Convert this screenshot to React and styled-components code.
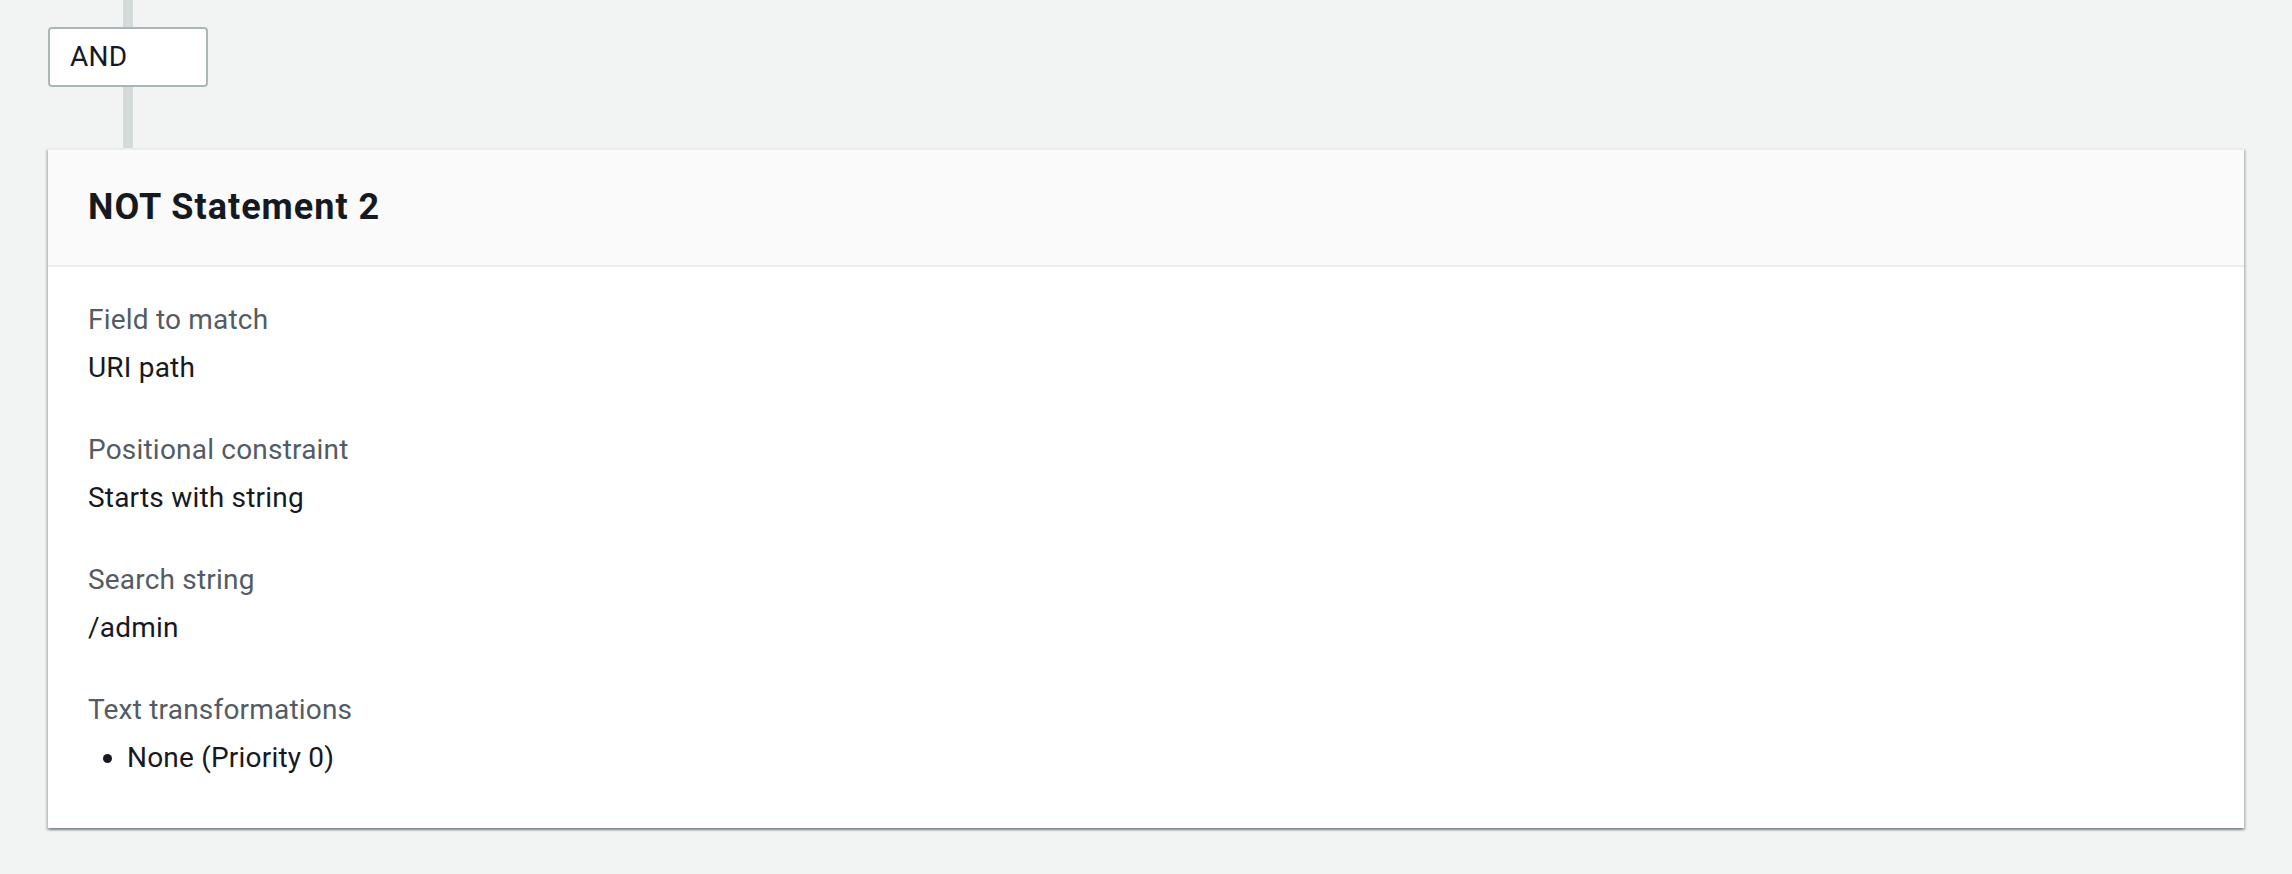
import styled, { createGlobalStyle } from "styled-components";

const GlobalStyle = createGlobalStyle`
  html, body {
    margin: 0;
    padding: 0;
    background: #f2f3f3;
  }
  body {
    font-family: Roboto, "Open Sans", "Liberation Sans", sans-serif;
    color: #16191f;
  }
`;

const details = [
  { label: "Field to match", value: "URI path" },
  { label: "Positional constraint", value: "Starts with string" },
  { label: "Search string", value: "/admin" },
];

const App = () => {
  return (
    <>
      <GlobalStyle />
      <Page>
        <Connector>
          <Line $height={27} />
          <Operator>AND</Operator>
          <Line $height={61} />
        </Connector>
        <Card>
          <Header>
            <Title>NOT Statement 2</Title>
          </Header>
          <Body>
            {details.map((d) => (
              <Pair key={d.label}>
                <Label>{d.label}</Label>
                <Value>{d.value}</Value>
              </Pair>
            ))}
            <Pair>
              <Label>Text transformations</Label>
              <List>
                <li>None (Priority 0)</li>
              </List>
            </Pair>
          </Body>
        </Card>
      </Page>
    </>
  );
};

export default App;

const Page = styled.div`
  padding: 0 48px 48px;
`;

const Connector = styled.div`
  display: flex;
  flex-direction: column;
  align-items: flex-start;
`;

const Line = styled.div`
  width: 10px;
  height: ${(p) => p.$height}px;
  margin-left: 75px;
  background: #d5dbdb;
`;

const Operator = styled.div`
  box-sizing: border-box;
  width: 160px;
  height: 60px;
  display: flex;
  align-items: center;
  padding: 0 20px 2px;
  background: #fff;
  border: 2px solid #aab7b8;
  border-radius: 4px;
  font-size: 28px;
  letter-spacing: 0.3px;
  color: #16191f;
`;

const Card = styled.div`
  background: #fff;
  border-top: 2px solid #eaeded;
  box-shadow: 0 2px 2px 0 rgba(0, 28, 36, 0.3),
    2px 2px 2px 0 rgba(0, 28, 36, 0.15),
    -2px 2px 2px 0 rgba(0, 28, 36, 0.15);
`;

const Header = styled.div`
  background: #fafafa;
  border-bottom: 2px solid #eaeded;
  padding: 35px 40px 36px;
`;

const Title = styled.h2`
  margin: 0;
  font-size: 36px;
  line-height: 44px;
  font-weight: 700;
  letter-spacing: 1px;
  color: #16191f;
`;

const Body = styled.div`
  display: flex;
  flex-direction: column;
  gap: 38px;
  padding: 31px 40px 48px;
`;

const Pair = styled.div`
  display: flex;
  flex-direction: column;
  gap: 4px;
`;

const Label = styled.div`
  font-size: 28px;
  line-height: 44px;
  letter-spacing: 0.2px;
  color: #545b64;
`;

const Value = styled.div`
  font-size: 28px;
  line-height: 44px;
  letter-spacing: 0.2px;
  color: #16191f;
`;

const List = styled.ul`
  margin: 0;
  padding-left: 39px;
  font-size: 28px;
  line-height: 44px;
  letter-spacing: 0.2px;
  color: #16191f;
`;
